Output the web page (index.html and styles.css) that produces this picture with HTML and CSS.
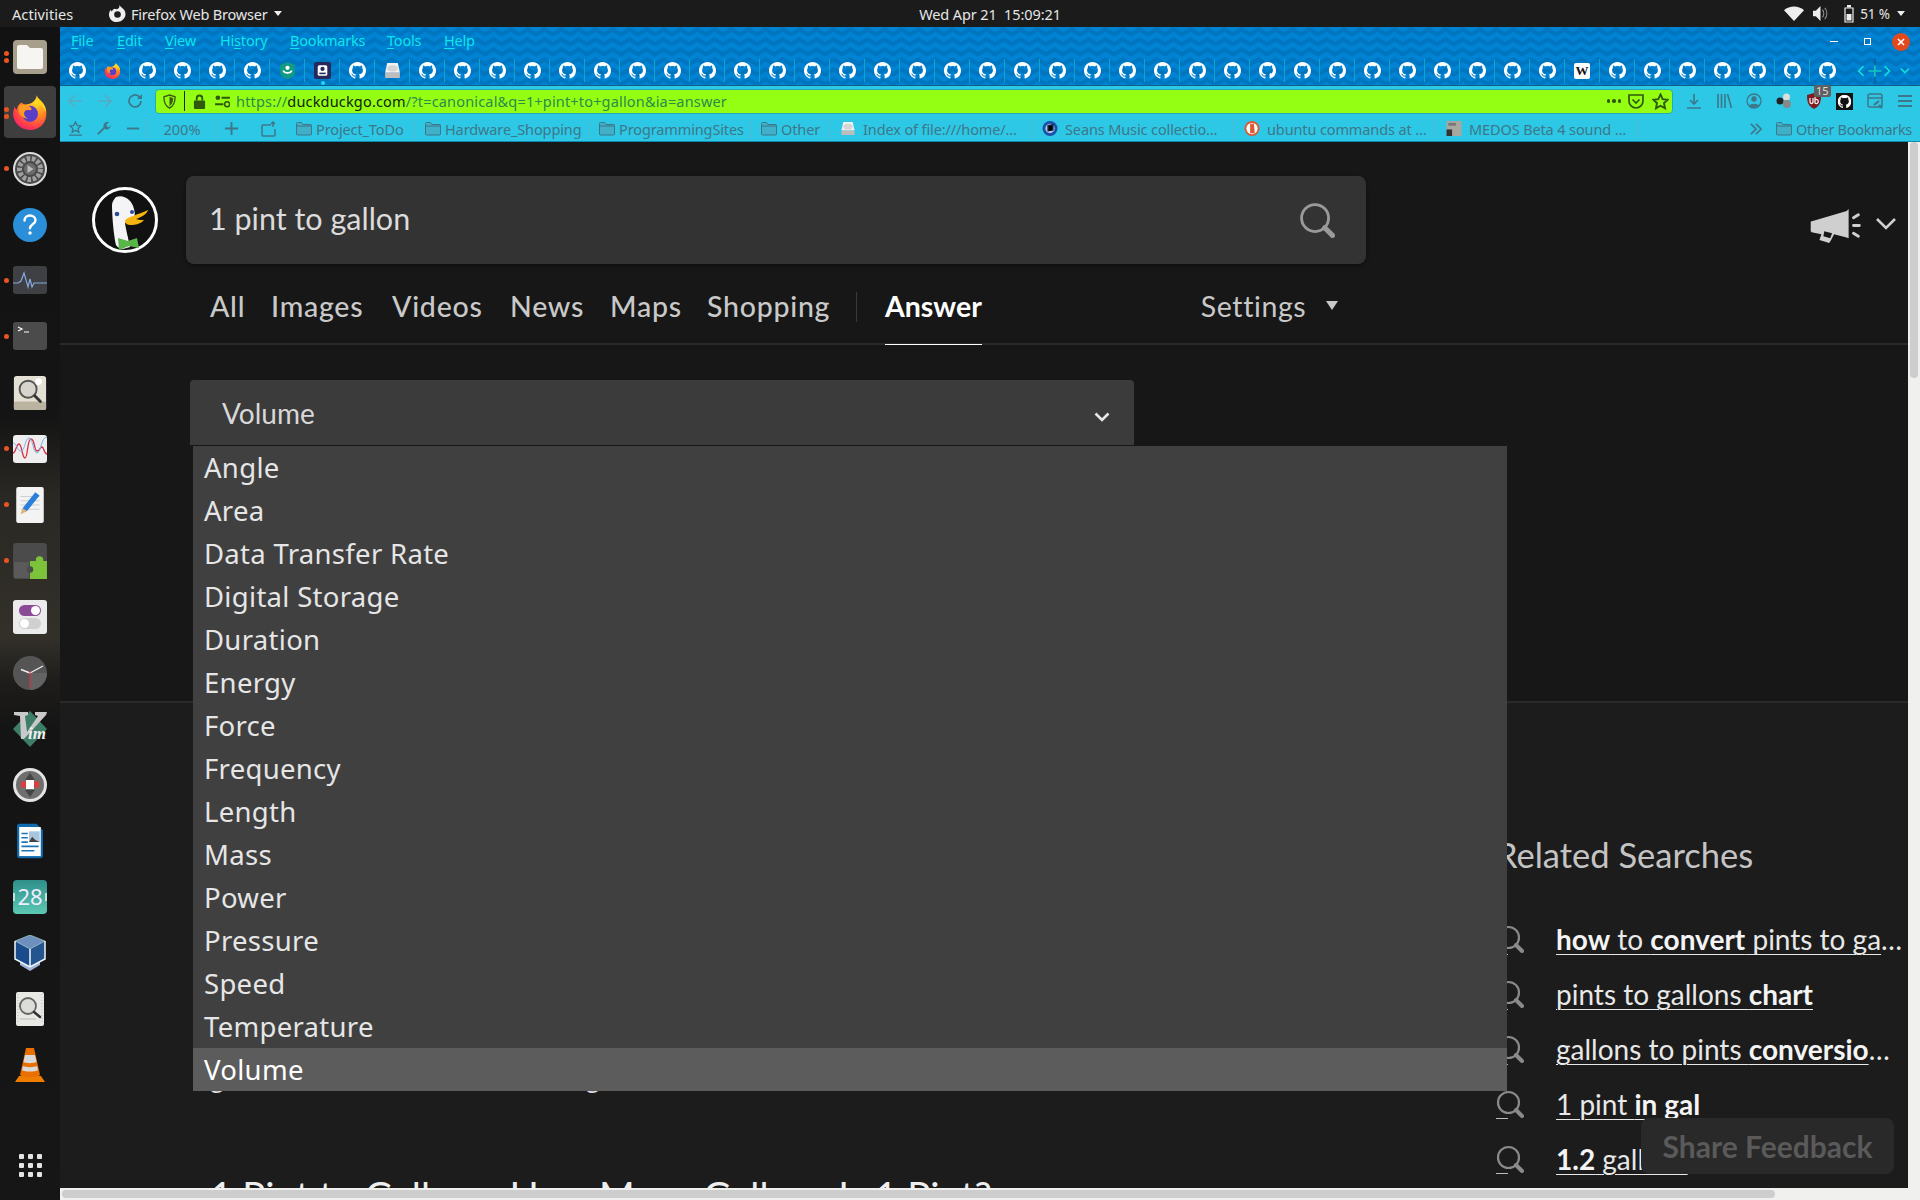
FILE: index.html
```html
<!DOCTYPE html>
<html lang="en">
<head>
<meta charset="utf-8">
<title>1 pint to gallon at DuckDuckGo</title>
<link rel="stylesheet" href="styles.css">
</head>
<body>
<svg class="defs" width="0" height="0" aria-hidden="true">
  <defs>
    <radialGradient id="ffbody" cx="0.7" cy="0.2" r="1">
      <stop offset="0" stop-color="#ffe226"/>
      <stop offset="0.4" stop-color="#ff8a1e"/>
      <stop offset="0.75" stop-color="#ff3750"/>
      <stop offset="1" stop-color="#e31587"/>
    </radialGradient>
    <linearGradient id="calbg" x1="0" y1="0" x2="0" y2="1">
      <stop offset="0" stop-color="#2f8f8a"/>
      <stop offset="1" stop-color="#5cc9b4"/>
    </linearGradient>
    <symbol id="gh" viewBox="0 0 16 16"><path fill="currentColor" d="M8 0C3.58 0 0 3.58 0 8c0 3.54 2.29 6.53 5.47 7.59.4.07.55-.17.55-.38 0-.19-.01-.82-.01-1.49-2.01.37-2.53-.49-2.69-.94-.09-.23-.48-.94-.82-1.13-.28-.15-.68-.52-.01-.53.63-.01 1.08.58 1.23.82.72 1.21 1.87.87 2.33.66.07-.52.28-.87.51-1.07-1.78-.2-3.64-.89-3.64-3.95 0-.87.31-1.59.82-2.15-.08-.2-.36-1.02.08-2.12 0 0 .67-.21 2.2.82.64-.18 1.32-.27 2-.27.68 0 1.36.09 2 .27 1.53-1.04 2.2-.82 2.2-.82.44 1.1.16 1.92.08 2.12.51.56.82 1.27.82 2.15 0 3.07-1.87 3.75-3.65 3.95.29.25.54.73.54 1.48 0 1.07-.01 1.93-.01 2.2 0 .21.15.46.55.38A8.013 8.013 0 0016 8c0-4.42-3.58-8-8-8z"/></symbol>
    <symbol id="ff" viewBox="0 0 36 38">
      <path fill="url(#ffbody)" d="M25 1c1 4 4 5 7 9 3 5 4 9 3 14-1 8-8 14-17 14C8 38 1 31 0 22c0-3 1-7 2-9 0 2 1 3 2 4 0-3 2-6 5-8 1 1 2 2 4 2 5 0 9-2 11-6 1-2 1-3 1-4z"/>
      <path fill="#ffd21f" d="M25 1c1 4 4 5 7 9 2 3 3 6 3 9-2-4-5-7-9-9 0-3 0-6-1-9z"/>
      <circle cx="18" cy="21" r="8.5" fill="#5a3ec8"/>
      <path fill="#ff9a24" d="M6 12c3-1 8-1 11 1 4 2 3 5 0 4-2 0-4 0-5 2-1 3 1 6 4 7-5 0-9-3-10-8 0-2 0-4 0-6z"/>
    </symbol>
    <symbol id="folder" viewBox="0 0 16 14"><path fill="#3fb0c8" stroke="currentColor" stroke-width="1" d="M.5 2A1 1 0 011.5 1h4l1.5 2h7.5a1 1 0 011 1v8.500a1 1 0 01-1 1h-13a1 1 0 01-1-1z"/><path fill="none" stroke="currentColor" stroke-width="1" d="M.5 4.500h15"/></symbol>
    <symbol id="mag" viewBox="0 0 28 28"><circle cx="12.500" cy="12.500" r="10.500" fill="none" stroke="currentColor" stroke-width="2.200"/><path stroke="currentColor" stroke-width="4" stroke-linecap="round" d="M20 20l6 6"/></symbol>
    <symbol id="disk" viewBox="0 0 16 16"><path fill="#f2f2f2" d="M3 1h10l2 9H1z"/><ellipse cx="8" cy="6" rx="5" ry="3" fill="#d5d5d5"/><rect x="1" y="10" width="14" height="5" rx="1" fill="#bdbdbd"/></symbol>
  </defs>
</svg>

<header class="topbar">
  <div class="top-left">
    <span class="activities">Activities</span>
    <svg class="top-ff" viewBox="0 0 18 18"><path fill="#eee" d="M11 0c1 2 3 3 5 5 2 3 2 7 0 9-2 3-5 4-8 4-5 0-8-4-8-8 0-2 1-4 2-5 0 1 1 2 1 2 1-2 2-3 3-3 2 1 4 0 5-2z"/><circle cx="9" cy="10" r="3.500" fill="#1b1b1b"/></svg>
    <span class="app-name">Firefox Web Browser</span>
    <i class="caret"></i>
  </div>
  <time class="clock">Wed Apr 21&nbsp; 15:09:21</time>
  <div class="top-right">
    <svg class="i-wifi" viewBox="0 0 24 18"><path fill="#eee" d="M12 18L0 5c7-6 17-6 24 0z"/></svg>
    <svg class="i-sound" viewBox="0 0 16 16"><path fill="#eee" d="M0 5h3l5-5v16l-5-5H0z"/><path fill="none" stroke="#8a8a8a" stroke-width="1.200" d="M10 4c2 2 2 6 0 8M12.500 2c3 3 3 9 0 12"/></svg>
    <svg class="i-batt" viewBox="0 0 10 18"><path fill="none" stroke="#eee" stroke-width="1.200" d="M1 3h8v14H1z"/><rect x="3" y="0" width="4" height="2.500" fill="#eee"/><rect x="2.500" y="9" width="5" height="6.500" fill="#eee"/></svg>
    <span class="batt-text">51 %</span>
    <i class="caret"></i>
  </div>
</header>

<div class="desk">
  <nav class="dock">
    <div class="dock-item"><i class="pip two"></i>
      <svg class="dk" viewBox="0 0 34 34"><rect width="34" height="34" rx="4" fill="#a79f8c"/><path fill="#f6f5f1" d="M4 7a2 2 0 012-2h8l3 3h11a2 2 0 012 2v17a2 2 0 01-2 2H6a2 2 0 01-2-2z"/></svg></div>
    <div class="dock-item active"><i class="pip two"></i>
      <svg class="dk dk-ff" viewBox="0 0 36 38"><use href="#ff"/></svg></div>
    <div class="dock-item"><i class="pip"></i>
      <svg class="dk" viewBox="0 0 34 34"><circle cx="17" cy="17" r="16" fill="#4a4a4a" stroke="#dcdcdc" stroke-width="2"/><circle cx="17" cy="17" r="10.500" fill="none" stroke="#a0a0a0" stroke-width="5" stroke-dasharray="3.500 1.600"/><circle cx="17" cy="17" r="6" fill="#6b6b6b"/><path fill="#bbb" d="M14.500 13l6 4-6 4z"/></svg></div>
    <div class="dock-item">
      <svg class="dk" viewBox="0 0 34 34"><circle cx="17" cy="17" r="17" fill="#2a8fd8"/><path fill="none" stroke="#fff" stroke-width="2.400" stroke-linecap="round" d="M11.500 12.500c0-3 2.500-5 5.500-5s5.500 2 5.500 4.800c0 4-5.500 4-5.500 8"/><circle cx="17" cy="25" r="1.700" fill="#fff"/></svg></div>
    <div class="dock-item"><i class="pip"></i>
      <svg class="dk" viewBox="0 0 34 30"><rect width="34" height="28" rx="3" fill="#3f4044"/><path fill="none" stroke="#86a7e0" stroke-width="1.200" d="M0 17h5l3-2 3-8 4 14 2-8 2 8 2-4h13"/></svg></div>
    <div class="dock-item"><i class="pip"></i>
      <svg class="dk" viewBox="0 0 34 30"><rect width="34" height="28" rx="3" fill="#4b4b4b"/><path fill="none" stroke="#fff" stroke-width="1.200" d="M5 5l4 2-4 2M11 10h5"/></svg></div>
    <div class="dock-item">
      <svg class="dk" viewBox="0 0 34 38"><rect y="1" width="34" height="36" rx="3" fill="#e4e0d4"/><rect y="28" width="34" height="9" rx="2" fill="#b9b3a0"/><circle cx="15" cy="15" r="9" fill="#d6d4cc" stroke="#555" stroke-width="2"/><circle cx="26" cy="7" r="3.500" fill="#fff"/><path stroke="#333" stroke-width="3" stroke-linecap="round" d="M22 22l6 6"/></svg></div>
    <div class="dock-item"><i class="pip"></i>
      <svg class="dk" viewBox="0 0 34 28"><rect width="34" height="28" rx="3" fill="#eeeeee"/><path fill="none" stroke="#d92b45" stroke-width="1.300" d="M0 18c3 0 3-9 6-9s3 14 6 14 2-19 6-19 3 12 6 12 3-4 5-4 2 7 5 7"/><path fill="none" stroke="#77b6e6" stroke-width="1" d="M0 8c4 0 4 8 8 8s4-13 8-13 4 15 8 15 4-16 10-16"/></svg></div>
    <div class="dock-item"><i class="pip"></i>
      <svg class="dk narrow" viewBox="0 0 26 34"><rect width="26" height="34" rx="2" fill="#f3f3f3"/><path stroke="#cfcfcf" d="M4 9h18M4 13h18M4 17h18M4 21h18"/><path fill="#2a7fdc" d="M18 5l4 3-12 15-4-3z"/><path fill="#e2b070" d="M6 20l4 3-6 3z"/></svg></div>
    <div class="dock-item"><i class="pip"></i>
      <svg class="dk" viewBox="0 0 32 34"><rect width="32" height="34" rx="3" fill="#4b4b4b"/><rect x="16" y="17" width="16" height="17" fill="#7cc23a"/><rect x="1" y="18" width="14" height="15" fill="#5a5a5a"/><circle cx="25" cy="16" r="3.500" fill="#7cc23a"/><circle cx="16" cy="25" r="3" fill="#4b4b4b"/></svg></div>
    <div class="dock-item">
      <svg class="dk" viewBox="0 0 34 34"><rect width="34" height="34" rx="3" fill="#ebebeb"/><rect x="6" y="5" width="22" height="11" rx="5.500" fill="#8b4a96"/><circle cx="22.500" cy="10.500" r="4.500" fill="#fff"/><rect x="6" y="18" width="22" height="11" rx="5.500" fill="#d0d0d0"/><circle cx="11.500" cy="23.500" r="4.500" fill="#fff"/></svg></div>
    <div class="dock-item">
      <svg class="dk" viewBox="0 0 34 34"><circle cx="17" cy="17" r="17" fill="#555"/><path fill="#636363" d="M17 17L34 17A17 17 0 0 1 17 34z"/><path fill="none" stroke="#eee" stroke-width="1.400" d="M17 17L8 13.500M17 17L30 10"/><path stroke="#e52a3c" stroke-width="1" d="M17 15v17"/></svg></div>
    <div class="dock-item">
      <svg class="dk" viewBox="0 0 34 36"><path fill="#3e7d68" d="M17 0l17 18-17 18L0 18z"/><path fill="#c9c9c9" d="M1 1h14v3l-3 1 2 16L25 5l-3-1V1h12l-1 3-22 24H8L7 5 1 4z"/><text class="vim-text" x="15" y="28">im</text></svg></div>
    <div class="dock-item">
      <svg class="dk" viewBox="0 0 34 34"><circle cx="17" cy="17" r="15.500" fill="#6f6f6f" stroke="#e4e4e4" stroke-width="3"/><path fill="#444" d="M17 5l5 7H12zM17 29l-5-7h10z"/><rect x="8" y="13.500" width="18" height="6" fill="#e03a3e"/><rect x="13" y="12" width="8" height="9" fill="#fff"/></svg></div>
    <div class="dock-item">
      <svg class="dk narrow" viewBox="0 0 26 32"><path fill="#0f6bad" d="M1 2a2 2 0 012-2h16l6 6v24a2 2 0 01-2 2H3a2 2 0 01-2-2z"/><rect x="3" y="3" width="20" height="27" fill="#fff"/><path stroke="#1d75b8" stroke-width="1.500" d="M5 9h6M5 13h6M5 17h6M5 21h16M5 25h12"/><rect x="12" y="7" width="10" height="10" fill="#a9c6dc"/><path fill="#444" d="M12 17l3-5 3 3 4 2z"/></svg></div>
    <div class="dock-item">
      <svg class="dk" viewBox="0 0 34 34"><rect width="34" height="34" rx="4" fill="url(#calbg)"/><text class="cal-text" x="17" y="25">28</text><path stroke="#e8f4f2" stroke-width="1.500" d="M1 13v8M33 13v8"/></svg></div>
    <div class="dock-item">
      <svg class="dk" viewBox="0 0 32 36"><path fill="#9fb3d8" d="M6 26l10 6 10-6v4l-10 6-10-6z"/><path fill="#1a4c8c" d="M16 14L1 6v18l15 8z"/><path fill="#24558f" d="M16 14l15-8v18l-15 8z"/><path fill="#6f8fbe" stroke="#cfe" stroke-width=".5" d="M16 0l15 6-15 8L1 6z"/><path fill="none" stroke="#f4f7fb" stroke-width="1.500" d="M16 14v18M1 6v18l15 8 15-8V6"/></svg></div>
    <div class="dock-item">
      <svg class="dk narrow" viewBox="0 0 28 34"><rect width="28" height="34" rx="2" fill="#e8e8e4"/><path stroke="#bbb" stroke-dasharray="1 2" d="M2 2v30M26 2v30"/><circle cx="12" cy="14" r="8" fill="#dcdcd8" stroke="#666" stroke-width="1.800"/><path stroke="#333" stroke-width="2.500" stroke-linecap="round" d="M18 20l6 5"/><path stroke="#bbb" d="M4 27h16"/></svg></div>
    <div class="dock-item">
      <svg class="dk" viewBox="0 0 30 36"><path fill="#ee7d00" d="M0 35l4-6h22l4 6z"/><path fill="#e86f00" d="M11 1h8l6 27c-3 3-17 3-20 0z"/><path fill="#d9d9d9" d="M10 8h10l1.500 7c-3 1.500-11 1.500-13 0z"/><path fill="#d9d9d9" d="M8 19c3 1.500 11 1.500 14 0l1 4c-3 2-13 2-16 0z"/></svg></div>
    <div class="dock-item apps"><span class="apps-grid"><i></i><i></i><i></i><i></i><i></i><i></i><i></i><i></i><i></i></span></div>
  </nav>

  <main class="browser">
    <div class="title-area">
      <div class="menubar">
        <span class="menu m-file"><u>F</u>ile</span>
        <span class="menu m-edit"><u>E</u>dit</span>
        <span class="menu m-view"><u>V</u>iew</span>
        <span class="menu m-hist">Hi<u>s</u>tory</span>
        <span class="menu m-book"><u>B</u>ookmarks</span>
        <span class="menu m-tools"><u>T</u>ools</span>
        <span class="menu m-help"><u>H</u>elp</span>
        <div class="winctl">
          <i class="w-min"></i><i class="w-max"></i>
          <svg class="w-close" viewBox="0 0 18 18"><circle cx="9" cy="9" r="9" fill="#e2491c"/><path stroke="#fff" stroke-width="1.600" d="M6 6l6 6M12 6l-6 6"/></svg>
        </div>
      </div>
      <div class="tabstrip">
        <span class="tab"><svg class="fav"><use href="#gh"/></svg></span>
        <span class="tab"><svg class="fav" viewBox="0 0 36 38"><use href="#ff"/></svg></span>
        <span class="tab"><svg class="fav"><use href="#gh"/></svg></span>
        <span class="tab"><svg class="fav"><use href="#gh"/></svg></span>
        <span class="tab"><svg class="fav"><use href="#gh"/></svg></span>
        <span class="tab"><svg class="fav"><use href="#gh"/></svg></span>
        <span class="tab"><svg class="fav" viewBox="0 0 16 16"><path fill="#129a82" d="M8 0l7 3v6c0 4-3 6-7 7-4-1-7-3-7-7V3z"/><circle cx="8" cy="5.500" r="2" fill="#fff"/><path fill="none" stroke="#fff" stroke-width="1.500" d="M4 8c1 3 7 3 8 0"/></svg></span>
        <span class="tab current"><svg class="fav" viewBox="0 0 16 16"><rect width="16" height="16" rx="2" fill="#27295a"/><rect x="3.500" y="3" width="9" height="10" rx="1.500" fill="#fff"/><circle cx="8" cy="6.500" r="2" fill="#27295a"/><rect x="5" y="10" width="6" height="1.500" fill="#27295a"/></svg></span>
        <span class="tab"><svg class="fav"><use href="#gh"/></svg></span>
        <span class="tab"><svg class="fav" viewBox="0 0 16 16"><use href="#disk"/></svg></span>
        <span class="tab"><svg class="fav"><use href="#gh"/></svg></span>
        <span class="tab"><svg class="fav"><use href="#gh"/></svg></span>
        <span class="tab"><svg class="fav"><use href="#gh"/></svg></span>
        <span class="tab"><svg class="fav"><use href="#gh"/></svg></span>
        <span class="tab"><svg class="fav"><use href="#gh"/></svg></span>
        <span class="tab"><svg class="fav"><use href="#gh"/></svg></span>
        <span class="tab"><svg class="fav"><use href="#gh"/></svg></span>
        <span class="tab"><svg class="fav"><use href="#gh"/></svg></span>
        <span class="tab"><svg class="fav"><use href="#gh"/></svg></span>
        <span class="tab"><svg class="fav"><use href="#gh"/></svg></span>
        <span class="tab"><svg class="fav"><use href="#gh"/></svg></span>
        <span class="tab"><svg class="fav"><use href="#gh"/></svg></span>
        <span class="tab"><svg class="fav"><use href="#gh"/></svg></span>
        <span class="tab"><svg class="fav"><use href="#gh"/></svg></span>
        <span class="tab"><svg class="fav"><use href="#gh"/></svg></span>
        <span class="tab"><svg class="fav"><use href="#gh"/></svg></span>
        <span class="tab"><svg class="fav"><use href="#gh"/></svg></span>
        <span class="tab"><svg class="fav"><use href="#gh"/></svg></span>
        <span class="tab"><svg class="fav"><use href="#gh"/></svg></span>
        <span class="tab"><svg class="fav"><use href="#gh"/></svg></span>
        <span class="tab"><svg class="fav"><use href="#gh"/></svg></span>
        <span class="tab"><svg class="fav"><use href="#gh"/></svg></span>
        <span class="tab"><svg class="fav"><use href="#gh"/></svg></span>
        <span class="tab"><svg class="fav"><use href="#gh"/></svg></span>
        <span class="tab"><svg class="fav"><use href="#gh"/></svg></span>
        <span class="tab"><svg class="fav"><use href="#gh"/></svg></span>
        <span class="tab"><svg class="fav"><use href="#gh"/></svg></span>
        <span class="tab"><svg class="fav"><use href="#gh"/></svg></span>
        <span class="tab"><svg class="fav"><use href="#gh"/></svg></span>
        <span class="tab"><svg class="fav"><use href="#gh"/></svg></span>
        <span class="tab"><svg class="fav"><use href="#gh"/></svg></span>
        <span class="tab"><svg class="fav"><use href="#gh"/></svg></span>
        <span class="tab"><svg class="fav"><use href="#gh"/></svg></span>
        <span class="tab wiki"><span class="wiki-w">W</span></span>
        <span class="tab"><svg class="fav"><use href="#gh"/></svg></span>
        <span class="tab"><svg class="fav"><use href="#gh"/></svg></span>
        <span class="tab"><svg class="fav"><use href="#gh"/></svg></span>
        <span class="tab"><svg class="fav"><use href="#gh"/></svg></span>
        <span class="tab"><svg class="fav"><use href="#gh"/></svg></span>
        <span class="tab"><svg class="fav"><use href="#gh"/></svg></span>
        <span class="tab last"><svg class="fav"><use href="#gh"/></svg></span>
        <svg class="tabctl" viewBox="0 -8 64 32"><rect x="21" y="-8" width="2" height="32" fill="#0a5c90" opacity=".7"/><path d="M8 2L2 8l6 6M34 2l6 6-6 6M54 5l5 5 5-5" fill="none" stroke="#0ce0e0" stroke-width="2"/><path d="M14 8h16M22 1v14" stroke="#14c8c0" stroke-width="2"/></svg>
      </div>
    </div>

    <div class="navbar">
      <svg class="nb-ic faded" viewBox="0 0 16 16"><path fill="none" stroke="currentColor" stroke-width="1.500" d="M15 8H2M8 2L2 8l6 6"/></svg>
      <svg class="nb-ic faded" viewBox="0 0 16 16"><path fill="none" stroke="currentColor" stroke-width="1.500" d="M1 8h13M8 2l6 6-6 6"/></svg>
      <svg class="nb-ic" viewBox="0 0 16 16"><path fill="none" stroke="currentColor" stroke-width="1.700" d="M14 8a6 6 0 11-2-4.500L14 5"/><path fill="currentColor" d="M15 1v5h-5z"/></svg>
      <div class="urlbar">
        <svg class="ub-shield" viewBox="0 0 14 16"><path fill="none" stroke="#3b5c12" stroke-width="1.500" d="M7 1l6 2c0 6-1 10-6 12C2 13 1 9 1 3z"/><path fill="#3b5c12" d="M7 3v10c3-2 4-5 4-8.500z"/></svg>
        <i class="ub-sep"></i>
        <svg class="ub-lock" viewBox="0 0 14 16"><path fill="none" stroke="#2f5a0c" stroke-width="2" d="M4 7V4.500a3 3 0 016 0V7"/><rect x="1" y="7" width="12" height="9" rx="1" fill="#2f5a0c"/></svg>
        <svg class="ub-perm" viewBox="0 0 16 14"><path stroke="#2f5a0c" stroke-width="2" d="M7 3h9M0 10h9"/><circle cx="3" cy="3" r="2.500" fill="#2f5a0c"/><circle cx="13" cy="10" r="2.700" fill="none" stroke="#2f5a0c" stroke-width="1.600"/></svg>
        <span class="url"><span class="url-dim">https://</span><span class="url-host">duckduckgo.com</span><span class="url-dim">/?t=canonical&amp;q=1+pint+to+gallon&amp;ia=answer</span></span>
        <span class="ub-dots"><i></i><i></i><i></i></span>
        <svg class="ub-pocket" viewBox="0 0 16 15"><path fill="none" stroke="#2f5a0c" stroke-width="1.700" d="M1 1h14v6a7 7 0 01-14 0z"/><path fill="none" stroke="#2f5a0c" stroke-width="1.700" d="M4.500 5.500L8 9l3.500-3.500"/></svg>
        <svg class="ub-star" viewBox="0 0 18 18"><path fill="none" stroke="#2f5a0c" stroke-width="2" d="M9 1.500l2.300 5 5.400.6-4 3.700 1.100 5.400L9 13.500l-4.800 2.700 1.100-5.400-4-3.700 5.400-.6z"/></svg>
      </div>
      <svg class="nb-ic" viewBox="0 0 16 16"><path fill="none" stroke="currentColor" stroke-width="1.600" d="M8 1v10M4 7l4 4 4-4M1 15h14"/></svg>
      <svg class="nb-ic" viewBox="0 0 16 16"><path fill="none" stroke="currentColor" stroke-width="1.600" d="M2 1v14M5.500 1v14M9 1v14M11.500 1l4 14"/></svg>
      <svg class="nb-ic" viewBox="0 0 16 16"><circle cx="8" cy="8" r="7" fill="none" stroke="currentColor" stroke-width="1.300"/><circle cx="8" cy="6" r="2.700" fill="currentColor"/><path fill="currentColor" d="M3 13c1-3 9-3 10 0-2 2-8 2-10 0z"/></svg>
      <svg class="nb-ic" viewBox="0 0 16 16"><circle cx="4" cy="8" r="3.500" fill="#222"/><circle cx="10.500" cy="4" r="3.500" fill="#ddd"/><circle cx="11" cy="11" r="4" fill="#888"/></svg>
      <span class="ublock">
        <svg class="nb-ic" viewBox="0 0 16 16"><path fill="#801b20" d="M8 0l7 2c0 7-1 11-7 14C2 13 1 9 1 2z"/><path fill="none" stroke="#eee" stroke-width="1.300" d="M4 5v4a1.500 1.500 0 003 0V5M9 4v6a2 2 0 100-3"/></svg>
        <span class="ub-badge">15</span>
      </span>
      <svg class="nb-ic gh-box" viewBox="-2 -2 20 20"><rect x="-2" y="-2" width="20" height="20" fill="#111"/><use href="#gh" width="16" height="16" color="#fff"/></svg>
      <svg class="nb-ic" viewBox="0 0 16 16"><rect x="1" y="1" width="14" height="13" rx="2" fill="none" stroke="currentColor" stroke-width="1.500"/><path stroke="currentColor" stroke-width="1.500" d="M1 5h14"/><path stroke="currentColor" stroke-width="2.200" d="M7 12l5-4M12 12l3 3"/></svg>
      <svg class="nb-ic" viewBox="0 0 16 16"><path stroke="currentColor" stroke-width="2" d="M1 3h14M1 8h14M1 13h14"/></svg>
    </div>

    <div class="bookmarks">
      <svg class="bb" viewBox="0 0 16 16"><path fill="none" stroke="currentColor" stroke-width="1.400" d="M8 1l1.800 3.700 4 .5-3 2.800.8 4L8 10l-3.600 2 .8-4-3-2.800 4-.5zM1 15h14"/></svg>
      <svg class="bb" viewBox="0 0 16 16"><path fill="none" stroke="currentColor" stroke-width="2" d="M2 14l7-7"/><path fill="currentColor" d="M8 6a4.500 4.500 0 016-5l-3 3 1 2 2 1 2-3a5 5 0 01-6 5z"/></svg>
      <svg class="bb minus" viewBox="0 0 16 16"><path stroke="currentColor" stroke-width="2" d="M1 8h13"/></svg>
      <span class="zoom-val">200%</span>
      <svg class="bb plus" viewBox="0 0 16 16"><path stroke="currentColor" stroke-width="2" d="M1 8h14M8 1v14"/></svg>
      <svg class="bb tabbox" viewBox="0 0 16 16"><path fill="none" stroke="currentColor" stroke-width="1.500" d="M1 4h9M14 8v6a1 1 0 01-1 1H2a1 1 0 01-1-1V4M12 6V1M10 3l2-2 2 2"/></svg>
      <span class="bm-start"></span>
      <a class="bm w-project"><svg class="bm-ic"><use href="#folder"/></svg><span class="bm-t">Project_ToDo</span></a>
      <a class="bm w-hardware"><svg class="bm-ic"><use href="#folder"/></svg><span class="bm-t">Hardware_Shopping</span></a>
      <a class="bm w-prog"><svg class="bm-ic"><use href="#folder"/></svg><span class="bm-t">ProgrammingSites</span></a>
      <a class="bm w-other"><svg class="bm-ic"><use href="#folder"/></svg><span class="bm-t">Other</span></a>
      <a class="bm w-long"><svg class="bm-ic" viewBox="0 0 16 16"><use href="#disk"/></svg><span class="bm-t">Index of file:///home/…</span></a>
      <a class="bm w-long"><svg class="bm-ic" viewBox="0 0 16 16"><circle cx="8" cy="8" r="8" fill="#1c4fa8"/><circle cx="8" cy="8" r="5" fill="#a7c6ee"/><path stroke="#123" stroke-width="1.500" d="M6 11V5l5-1v6"/></svg><span class="bm-t">Seans Music collectio…</span></a>
      <a class="bm w-long"><svg class="bm-ic" viewBox="0 0 16 16"><circle cx="8" cy="8" r="8" fill="#de5833"/><circle cx="8" cy="8" r="6" fill="#fff"/><path fill="#de5833" d="M6 3h4l1 10H6z"/></svg><span class="bm-t">ubuntu commands at …</span></a>
      <a class="bm w-long w-end"><svg class="bm-ic" viewBox="0 0 16 16"><rect width="16" height="16" fill="#a8a8a0"/><rect x="2" y="2" width="8" height="3" fill="#777"/><rect x="0" y="9" width="6" height="7" fill="#333"/></svg><span class="bm-t">MEDOS Beta 4 sound …</span></a>
      <svg class="bm-more" viewBox="0 0 14 14"><path fill="none" stroke="currentColor" stroke-width="2" d="M1 1l6 6-6 6M7 1l6 6-6 6"/></svg>
      <a class="bm-last"><svg class="bm-ic"><use href="#folder"/></svg><span class="bm-t">Other Bookmarks</span></a>
    </div>

    <div class="viewport">
      <div class="page">
        <section class="ddg-head">
          <div class="head-top">
            <svg class="logo" viewBox="0 0 66 66">
              <circle cx="33" cy="33" r="31.500" fill="#111" stroke="#fff" stroke-width="3"/>
              <path fill="#f4f4f6" d="M24 10c7-3 16 2 18 12 1 4 1 6 0 8l-9 6c1 7 3 14 5 24l-7 2c-4-1-6-2-7-4-3-14-4-34-4-40 0-3 2-6 4-8z"/>
              <path fill="#f5b50e" d="M33 34c1-4 13-6 23-11-1 4-6 7-12 9 3 1 5 1 8 1-3 4-9 5-13 5-3 0-6-1-6-4z"/>
              <circle cx="25" cy="27" r="2.300" fill="#2c4a9a"/><circle cx="40" cy="25" r="2" fill="#2c4a9a"/>
              <path fill="#59b548" d="M26 51l10 3 9-3 2 10-10-2-10 4z"/>
            </svg>
            <div class="searchbox">
              <span class="q">1 pint to gallon</span>
              <svg class="q-ic"><use href="#mag"/></svg>
            </div>
            <svg class="mega" viewBox="0 0 52 36"><path fill="#cfcfcf" d="M0 14l3-1L37 3l2-2v30l-3-1-12-3-3 6-2 3-10-3 2-6-10-2-1-1z"/><path fill="#171717" d="M14 24l8 2-2 5-7-2z"/><path stroke="#cfcfcf" stroke-width="3" stroke-linecap="round" d="M44 10l5-3M44 18h6M44 26l5 3"/></svg>
            <svg class="mega-chev" viewBox="0 0 20 12"><path fill="none" stroke="#cfcfcf" stroke-width="2.600" d="M1 1l9 9 9-9"/></svg>
          </div>
          <nav class="tabs">
            <a class="t t-all">All</a>
            <a class="t t-img">Images</a>
            <a class="t t-vid">Videos</a>
            <a class="t t-news">News</a>
            <a class="t t-maps">Maps</a>
            <a class="t t-shop">Shopping</a>
            <i class="t-sep"></i>
            <a class="t t-ans">Answer</a>
            <a class="t t-set">Settings<i class="set-tri"></i></a>
          </nav>
        </section>

        <section class="answer">
          <div class="select"><span>Volume</span>
            <svg class="sel-chev" viewBox="0 0 16 10"><path fill="none" stroke="#e8e8e8" stroke-width="2.600" d="M1.500 1.500L8 8l6.500-6.500"/></svg>
          </div>
        </section>

        <section class="lower">
          <div class="lower-left">
            <p class="hidden-line">gallon. A unit of volume used in g</p>
            <h2 class="article-h">1 Pint to Gallons: How Many Gallons Is 1 Pint?</h2>
          </div>
          <aside class="related">
            <h3 class="rel-h">Related Searches</h3>
            <ul class="rel-list">
              <li class="rel"><svg class="rel-ic"><use href="#mag"/></svg><a class="rel-a"><b>how</b> to <b>convert</b> pints to gallons</a></li>
              <li class="rel"><svg class="rel-ic"><use href="#mag"/></svg><a class="rel-a">pints to gallons <b>chart</b></a></li>
              <li class="rel"><svg class="rel-ic"><use href="#mag"/></svg><a class="rel-a rel-short">gallons to pints <b>conversion</b> chart</a></li>
              <li class="rel"><svg class="rel-ic"><use href="#mag"/></svg><a class="rel-a">1 pint <b>in gal</b></a></li>
              <li class="rel"><svg class="rel-ic"><use href="#mag"/></svg><a class="rel-a"><b>1.2</b> gallons</a></li>
            </ul>
          </aside>
        </section>

        <ul class="droplist">
          <li>Angle</li><li>Area</li><li>Data Transfer Rate</li><li>Digital Storage</li><li>Duration</li>
          <li>Energy</li><li>Force</li><li>Frequency</li><li>Length</li><li>Mass</li>
          <li>Power</li><li>Pressure</li><li>Speed</li><li>Temperature</li><li class="sel">Volume</li>
        </ul>
        <button class="feedback">Share Feedback</button>
      </div>
      <div class="vbar"><i></i></div>
      <div class="hbar"><i></i></div>
      <div class="corner"></div>
    </div>
  </main>
</div>
</body>
</html>
```

FILE: styles.css
```css
* { box-sizing: border-box; }
html, body { margin: 0; padding: 0; }
body {
  width: 1920px; height: 1200px; overflow: hidden;
  display: flex; flex-direction: column;
  background: #111; color: #eee;
  font-family: "Lato", "Noto Sans", sans-serif;
}
.defs { position: absolute; }
ul { list-style: none; margin: 0; padding: 0; }
p, h2, h3 { margin: 0; }
a { color: inherit; }

/* top bar */
.topbar {
  height: 27px; flex: none; background: #1b1b1b; color: #e6e6e6;
  display: grid; grid-template-columns: 1fr auto 1fr; align-items: center;
  font: 14.5px "Noto Sans", sans-serif;
}
.top-left { display: flex; align-items: center; padding-left: 12px; }
.activities { width: 97px; letter-spacing: .1px; }
.top-ff { width: 17px; height: 17px; margin-right: 5px; }
.app-name { letter-spacing: -.2px; }
.caret { width: 0; height: 0; border: 4px solid transparent; border-top: 5px solid #eee; border-bottom: 0; margin-left: 7px; }
.clock { letter-spacing: -.1px; margin-left: 60px; }
.top-right { display: flex; align-items: center; justify-content: flex-end; padding-right: 15px; }
.i-wifi { width: 20px; height: 15px; margin-right: 9px; }
.i-sound { width: 15px; height: 15px; margin-right: 16px; }
.i-batt { width: 10px; height: 18px; margin-right: 6px; }
.batt-text { font-size: 13.500px; letter-spacing: -.1px; }

.desk { flex: 1; display: flex; min-height: 0; }

/* dock */
.dock {
  width: 60px; flex: none; display: flex; flex-direction: column; padding-top: 2px;
  background: linear-gradient(#121212 0, #141414 33%, #2a2824 40%, #33302a 52%, #1d1c1a 56%, #141414 60%, #161616 100%);
}
.dock-item { height: 56px; flex: none; display: flex; align-items: center; justify-content: center; position: relative; }
.dock-item.active::before { content: ""; position: absolute; left: 4px; right: 4px; top: 1px; bottom: 3px; background: #3e3e3e; border-radius: 4px; }
.dk { width: 34px; height: 36px; position: relative; }
.dk-ff { margin-top: -3px; }
.dk.narrow { width: 28px; }
.pip { position: absolute; left: 4px; top: 25px; width: 5px; height: 5px; border-radius: 50%; background: #e95420; z-index: 1; }
.pip.two { top: 22px; box-shadow: 0 7px 0 #e95420; }
.vim-text { font: italic 700 17px "Liberation Serif", serif; fill: #eee; }
.cal-text { font: 22px "Noto Sans", sans-serif; fill: #eef; text-anchor: middle; }
.apps { margin-top: auto; margin-bottom: 7px; }
.apps-grid { display: grid; grid-template-columns: repeat(3, 5px); gap: 4px; }
.apps-grid i { width: 5px; height: 5px; border-radius: 1px; background: #e4e4e4; }

/* browser chrome */
.browser { flex: 1; min-width: 0; display: flex; flex-direction: column; }
.title-area {
  height: 59px; flex: none; border-bottom: 1px solid #0b5f8d;
  background-color: #0083d3;
  background-image: url("data:image/svg+xml,%3Csvg xmlns='http://www.w3.org/2000/svg' width='17' height='10'%3E%3Cpath d='M-1 8L8.500 2.500L18 8' fill='none' stroke='%230075c0' stroke-width='4.300'/%3E%3C/svg%3E");
  background-size: 17px 10px;
}
.menubar { height: 29px; display: flex; align-items: center; position: relative; font: 14.500px "Noto Sans", sans-serif; color: #0ce6ee; padding-bottom: 4px; }
.menu { flex: none; letter-spacing: -.2px; }
.menu u { text-underline-offset: 2px; }
.m-file { margin-left: 11px; width: 46px; }
.m-edit { width: 48px; }
.m-view { width: 55px; }
.m-hist { width: 70px; }
.m-book { width: 97px; }
.m-tools { width: 57px; }
.winctl { margin-left: auto; display: flex; align-items: center; padding-top: 4px; }
.w-min { width: 8px; height: 1px; background: #fff; margin-right: 26px; }
.w-max { width: 7px; height: 7px; border: 1px solid #fff; margin-right: 21px; }
.w-close { width: 18px; height: 18px; margin-right: 10px; }
.tabstrip { height: 29px; display: flex; align-items: center; color: #fff; }
.tab { width: 35px; height: 23px; flex: none; display: flex; align-items: center; justify-content: center; border-right: 1px solid #12a2cf; position: relative; }
.tab.last { border-right: 0; }
.fav { width: 17px; height: 17px; }
.tab.current::after { content: ""; position: absolute; left: 16px; bottom: -3px; width: 4px; height: 4px; border-radius: 50%; background: #20d8f0; }
.wiki-w { width: 16px; height: 16px; background: #fff; color: #111; border-radius: 2px; font: 700 13px/16px "Liberation Serif", serif; text-align: center; }
.tabctl { width: 52px; height: 26px; margin-left: 12px; }

.navbar { height: 30px; flex: none; display: flex; align-items: center; background: #2dc8e6; color: #3d7789; }
.nb-ic { width: 16px; height: 16px; margin: 0 7px; flex: none; display: block; }
.navbar > .nb-ic { box-sizing: content-box; }
.navbar > .nb-ic.faded { color: #5aa9c0; }
.gh-box { width: 17px; height: 17px; }
.urlbar {
  flex: 1; height: 25px; margin: 0 6px 0 5px; display: flex; align-items: center;
  background: #94ff12; border: 1px solid #25a8b8; border-radius: 4px;
  font: 14.500px "Noto Sans", sans-serif; white-space: nowrap;
}
.ub-shield { width: 13px; height: 15px; margin-left: 7px; }
.ub-sep { width: 1px; height: 20px; background: #222; margin-left: 8px; }
.ub-lock { width: 13px; height: 15px; margin-left: 8px; }
.ub-perm { width: 15px; height: 13px; margin-left: 9px; }
.url { margin-left: 6px; flex: 1; letter-spacing: .17px; }
.url-dim { color: #2b8a4c; }
.url-host { color: #10220a; }
.ub-dots { display: flex; gap: 2px; margin-right: 7px; }
.ub-dots i { width: 3.500px; height: 3.500px; border-radius: 50%; background: #2f5a0c; }
.ub-pocket { width: 16px; height: 15px; margin-right: 8px; }
.ub-star { width: 17px; height: 17px; margin-right: 3px; }
.ublock { position: relative; display: block; height: 16px; }
.ub-badge { position: absolute; top: -8px; left: 15px; padding: 0 2px; background: #606060; color: #ddd; font: 11px/12px "Noto Sans", sans-serif; border-radius: 2px; }

.bookmarks {
  height: 26px; flex: none; display: flex; align-items: center;
  background: #2dc8e6; border-bottom: 1px solid #1188ad; color: #3d7789;
  font: 14.500px "Noto Sans", sans-serif; white-space: nowrap; padding-left: 8px;
}
.bb { width: 15px; height: 15px; flex: none; margin-right: 13px; }
.bb.minus { margin-left: 2px; margin-right: 0; }
.zoom-val { width: 70px; height: 20px; flex: none; text-align: center; line-height: 20px; margin-left: 6px; margin-right: 7px; border-left: 1px solid #52b9d3; border-right: 1px solid #52b9d3; }
.tabbox { margin-left: 9px; margin-right: 0; width: 16px; height: 16px; }
.bm-start { width: 0; height: 20px; margin-left: 8px; }
.bm { height: 20px; flex: none; display: flex; align-items: center; gap: 4px; padding-left: 10px; border-left: 1px solid #52b9d3; overflow: hidden; }
.bm-ic { width: 16px; height: 15px; flex: none; }
.bm-t { letter-spacing: -.12px; }
.w-project { width: 129px; }
.w-hardware { width: 174px; }
.w-prog { width: 162px; }
.w-other { width: 79px; }
.w-long { width: 202px; gap: 7px; }
.w-end { border-right: 1px solid #52b9d3; }
.bm-more { width: 12px; height: 12px; margin-left: auto; flex: none; }
.bm-last { display: flex; align-items: center; gap: 4px; margin-left: 14px; padding-right: 8px; }
.bm-last .bm-t { letter-spacing: -.3px; }

/* viewport */
.viewport { flex: 1; min-height: 0; display: grid; grid-template-columns: 1fr 12px; grid-template-rows: 1fr 12px; }
.page { position: relative; overflow: hidden; background: #1c1c1c; display: flex; flex-direction: column; }
.vbar { background: #f0f0ee; padding: 0 2px; }
.vbar i { display: block; height: 236px; background: #cdcdcd; border-radius: 4px; }
.hbar { background: #f0f0ee; padding: 2px 0 2px 2px; }
.hbar i { display: block; height: 8px; width: 1713px; background: #cdcdcd; border-radius: 4px; }
.corner { background: #f0f0ee; }

.ddg-head { height: 203px; flex: none; background: #171717; border-bottom: 2px solid #2a2a2a; }
.head-top { height: 122px; display: flex; align-items: flex-start; }
.logo { width: 66px; height: 66px; margin: 45px 28px 0 32px; flex: none; }
.searchbox {
  width: 1180px; height: 88px; margin-top: 34px; flex: none;
  background: #333; border-radius: 8px; box-shadow: 0 2px 4px rgba(0,0,0,.4);
  display: flex; align-items: center; justify-content: space-between; padding: 0 31px 0 23px;
}
.q { font-size: 30.500px; font-weight: 400; color: #dcdcdc; margin-top: -4px; }
.q-ic { width: 36px; height: 36px; color: #9a9a9a; }
.mega { width: 54px; height: 35px; margin: 66px 0 0 443px; flex: none; }
.mega-chev { width: 20px; height: 12px; margin: 76px 0 0 13px; flex: none; }
.tabs { height: 79px; display: flex; align-items: flex-start; font-size: 28.500px; letter-spacing: .75px; color: #c9c9c9; font-weight: 500; padding-top: 1px; }
.t { height: 81px; line-height: 82px; flex: none; }
.t-all { margin-left: 150px; width: 61px; }
.t-img { width: 121px; }
.t-vid { width: 118px; }
.t-news { width: 100px; }
.t-maps { width: 97px; }
.t-shop { width: 149px; }
.t-sep { width: 1px; height: 30px; margin-top: 27px; background: #3a3a3a; flex: none; }
.t-ans { margin-left: 28px; color: #fff; font-weight: 700; letter-spacing: 0; border-bottom: 2px solid #fff; }
.t-set { margin-left: 219px; display: flex; font-weight: 400; letter-spacing: .6px; }
.set-tri { width: 0; height: 0; border: 6.500px solid transparent; border-top: 9px solid #c9c9c9; border-bottom: 0; margin: 36px 0 0 20px; }

.answer { height: 358px; flex: none; background: #171717; border-bottom: 2px solid #2a2a2a; padding: 35px 0 0 130px; }
.select {
  width: 944px; height: 65px; background: #3b3b3b; border-radius: 4px 4px 0 0;
  display: flex; align-items: center; justify-content: space-between;
  padding: 0 24px 0 32px; font-size: 28px; font-weight: 400; color: #d8d8d8;
}
.sel-chev { width: 16px; height: 10px; margin-top: 8px; }

.lower { flex: 1; min-height: 0; display: flex; }
.lower-left { width: 1436px; flex: none; padding: 358px 0 0 150px; }
.hidden-line { font-size: 27px; line-height: 34px; color: #ddd; height: 114px; white-space: nowrap; }
.article-h { font-size: 38.500px; font-weight: 400; color: #eee; line-height: 40px; white-space: nowrap; }
.related { flex: 1; min-width: 0; padding-top: 132px; }
.rel-h { font-size: 34.500px; font-weight: 400; color: #c4c4c4; margin-left: 0; line-height: 40px; white-space: nowrap; }
.rel-list { margin-top: 37px; }
.rel { height: 54.800px; display: flex; align-items: center; position: relative; }
.rel-ic { width: 28px; height: 28px; color: #8a8a8a; flex: none; margin-right: 32px; }
.rel::before { content: ""; position: absolute; left: 0; top: 42px; width: 12px; height: 1px; background: #bbb; }
.rel-a { max-width: 348px; overflow: hidden; text-overflow: ellipsis; white-space: nowrap; font-size: 28px; font-weight: 400; color: #e8e8e8; text-decoration: underline; text-decoration-thickness: 1px; text-underline-offset: 4px; }
.rel-a b { font-weight: 700; color: #f4f4f4; }
.rel-short { max-width: 334px; }

.droplist { position: absolute; left: 133px; top: 304px; width: 1314px; background: #404040; font: 27.500px "Noto Sans", sans-serif; letter-spacing: .3px; color: #e6e6e6; }
.droplist li { height: 43px; line-height: 44px; padding-left: 11px; }
.droplist li.sel { background: #5c5c5c; color: #fff; }
.feedback { position: absolute; left: 1581px; top: 976px; width: 253px; height: 56px; border: 0; border-radius: 8px; background: #292929; color: #5a5a5a; font: 700 30px "Lato", sans-serif; }
```
